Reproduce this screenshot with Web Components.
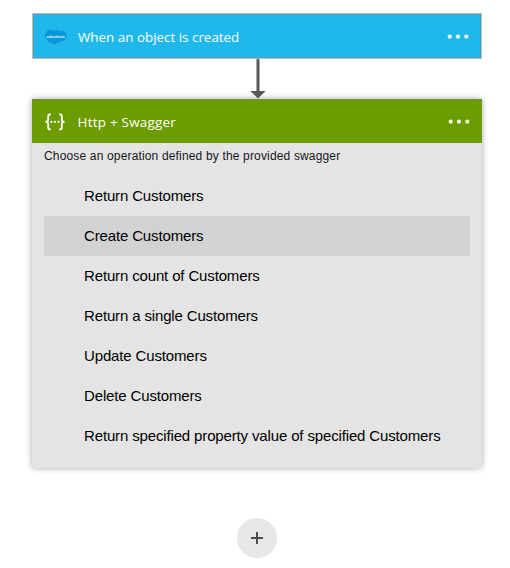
<!DOCTYPE html>
<html lang="en">
<head>
<meta charset="utf-8">
<title>Workflow designer</title>
<style>
  body { margin: 0; background: #fff; font-family: "Liberation Sans", Arial, sans-serif; color: #000; }
</style>
</head>
<body>
<flow-canvas>
  <flow-step kind="trigger">
    <salesforce-icon slot="icon"></salesforce-icon>
    <span slot="title">When an object is created</span>
  </flow-step>
  <flow-arrow></flow-arrow>
  <flow-step kind="action">
    <swagger-icon slot="icon"></swagger-icon>
    <span slot="title">Http + Swagger</span>
    <operation-list>
      <span slot="hint">Choose an operation defined by the provided swagger</span>
      <operation-item>Return Customers</operation-item>
      <operation-item active>Create Customers</operation-item>
      <operation-item>Return count of Customers</operation-item>
      <operation-item>Return a single Customers</operation-item>
      <operation-item>Update Customers</operation-item>
      <operation-item>Delete Customers</operation-item>
      <operation-item>Return specified property value of specified Customers</operation-item>
    </operation-list>
  </flow-step>
  <add-button></add-button>
</flow-canvas>
<script>
const define = (name, html) => customElements.define(name, class extends HTMLElement {
  constructor() {
    super();
    this.attachShadow({ mode: "open" }).innerHTML = html;
  }
});

define("flow-canvas", `
<style>
  :host { display: flex; flex-direction: column; box-sizing: border-box; width: 510px; height: 568px; padding: 13px 28px 0 32px; }
</style><slot></slot>`);

define("flow-step", `
<style>
  :host { display: block; box-sizing: border-box; width: 450px; flex: none; }
  header { display: flex; align-items: center; box-sizing: border-box; color: #fff; }
  .title { flex: 1; font: 13.4px/20px "Open Sans", "Noto Sans", sans-serif; white-space: nowrap; padding-left: 11px; }
  .dots { display: block; flex: none; }
  :host([kind="trigger"]) { height: 46px; border: 1px solid #b7bdc0; }
  :host([kind="trigger"]) header { height: 44px; background: #20b8eb; border: 1px solid #4ba0be; padding: 2px 11px 0 10px; }
  :host([kind="action"]) { height: 369px; background: #e4e4e4; border-radius: 0 0 4px 4px; box-shadow: 0 0 6px rgba(0,0,0,.35); }
  :host([kind="action"]) header { height: 44px; background: #6c9c00; border-top: 1px solid #73875a; padding: 1px 12px 0 12px; }
  :host([kind="action"]) .title { padding-left: 11.5px; letter-spacing: .26px; }
</style>
<header>
  <slot name="icon"></slot>
  <div class="title"><slot name="title"></slot></div>
  <svg class="dots" width="22" height="6" viewBox="0 0 22 6" fill="#fff"><circle cx="2.7" cy="2.6" r="2.05"/><circle cx="11" cy="2.6" r="2.05"/><circle cx="19.3" cy="2.6" r="2.05"/></svg>
</header>
<slot></slot>`);

define("salesforce-icon", `
<style>:host, svg { display: block; width: 23px; height: 16px; overflow: visible; }</style>
<svg viewBox="0 0 23 16">
  <path fill="#0b97db" d="M9.5 2.2C10.3 1.2 11.4.8 12.6.8c1.4 0 2.6.7 3.3 1.7C19.8 1 22.6 3.8 22.6 7.1c0 3.3-2.6 5.7-5.5 5.2-.8 1.3-2.4 1.8-3.8 1.2-1.4 2.7-5.2 2.5-6.2-.2C4.7 13.8 2.8 12.2 2.9 10 .2 8.6.1 5.2 2.2 3.8 2.3.3 7.3-.7 9.5 2.2z"/>
  <text x="11.6" y="8.9" text-anchor="middle" fill="#e9f8ff" font-family="Liberation Sans, sans-serif" font-size="3.7" font-style="italic" font-weight="bold">salesforce</text>
</svg>`);

define("swagger-icon", `
<style>:host, svg { display: block; width: 22px; height: 18px; }</style>
<svg viewBox="0 0 22 18" fill="none" stroke="#fff" stroke-width="1.8">
  <path d="M6.800 1.300H6Q4.200 1.300 4.200 3.200V6.500Q4.200 8.800 1.500 8.800Q4.200 8.800 4.200 11.100V14.400Q4.200 16.300 6 16.300H6.800"/>
  <path d="M15.200 1.300H16Q17.800 1.300 17.800 3.200V6.500Q17.800 8.800 20.500 8.800Q17.800 8.800 17.800 11.100V14.400Q17.800 16.300 16 16.300H15.200"/>
  <g fill="#fff" stroke="none"><circle cx="7.4" cy="8.8" r="1.15"/><circle cx="11" cy="8.8" r="1.15"/><circle cx="14.6" cy="8.8" r="1.15"/></g>
</svg>`);

define("flow-arrow", `
<style>:host { display: flex; justify-content: center; flex: none; width: 450px; height: 40px; position: relative; z-index: 1; } svg { display: block; margin-left: 2px; }</style>
<svg width="18" height="40" viewBox="0 0 18 40" fill="#58595b"><path d="M7.500 0h3v32h6.200L9 39.500 1.300 32h6.200z"/></svg>`);

define("operation-list", `
<style>
  :host { display: block; padding: 5px 12px 0; }
  .hint { font-size: 12px; line-height: 16px; letter-spacing: .16px; color: #16161c; padding-bottom: 12px; white-space: nowrap; }
</style>
<div class="hint"><slot name="hint"></slot></div><slot></slot>`);

define("operation-item", `
<style>
  :host { display: flex; align-items: center; box-sizing: border-box; height: 40px; padding-left: 40px; font-size: 15px; line-height: 20px; letter-spacing: -.145px; white-space: nowrap; }
  :host([active]) { background: #d2d2d2; }
</style><slot></slot>`);

define("add-button", `
<style>
  :host { display: flex; align-items: center; justify-content: center; flex: none; width: 40px; height: 40px; margin: 50px 0 0 205px; border-radius: 50%; background: #e6e7e8; }
</style>
<svg width="12" height="12" viewBox="0 0 12 12" fill="#4d4d4f"><path d="M5 0h2v5h5v2H7v5H5V7H0V5h5z"/></svg>`);
</script>
</body>
</html>
